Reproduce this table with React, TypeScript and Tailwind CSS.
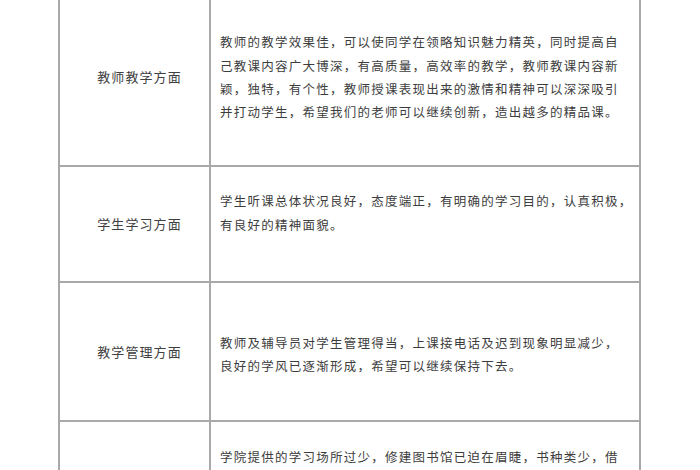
import React from "react";

const font = { fontFamily: '"Noto Sans CJK SC", "Noto Sans", sans-serif' };

type Row = { label: string; lines: string[]; h: string; rightPad?: string };

const rows: Row[] = [
  {
    label: "教师教学方面",
    lines: [
      "教师的教学效果佳，可以使同学在领略知识魅力精英，同时提高自",
      "己教课内容广大博深，有高质量，高效率的教学，教师教课内容新",
      "颖，独特，有个性，教师授课表现出来的激情和精神可以深深吸引",
      "并打动学生，希望我们的老师可以继续创新，造出越多的精品课。",
    ],
    h: "h-[178px] mt-[-11px]",
    rightPad: "",
  },
  {
    label: "学生学习方面",
    lines: [
      "学生听课总体状况良好，态度端正，有明确的学习目的，认真积极，",
      "有良好的精神面貌。",
    ],
    h: "h-[116px]",
    rightPad: "pb-[23px]",
  },
  {
    label: "教学管理方面",
    lines: [
      "教师及辅导员对学生管理得当，上课接电话及迟到现象明显减少，",
      "良好的学风已逐渐形成，希望可以继续保持下去。",
    ],
    h: "h-[139px]",
    rightPad: "pt-[5px]",
  },
];

export default function App() {
  return (
    <div className="w-[700px] h-[470px] overflow-hidden bg-white" style={font}>
      <div className="ml-[58px] w-[583px] border-x-2 border-[#a9a9a9]">
        {rows.map((r, i) => (
          <div key={i} className={`flex border-b-2 border-[#a9a9a9] ${r.h}`}>
            <div className="w-[151px] shrink-0 border-r-2 border-[#a9a9a9] flex items-center justify-center pl-[10px]">
              <span className="text-[13px] tracking-[1.1px] text-[#404040] whitespace-nowrap">{r.label}</span>
            </div>
            <div className={`flex-1 flex flex-col justify-center pl-[9px] ${r.rightPad}`}>
              {r.lines.map((l, j) => (
                <div key={j} className="text-[12.5px] leading-[23.3px] tracking-[1.25px] text-[#3d3d3d] whitespace-nowrap">
                  {l}
                </div>
              ))}
            </div>
          </div>
        ))}
        <div className="flex h-[140px]">
          <div className="w-[151px] shrink-0 border-r-2 border-[#a9a9a9]"></div>
          <div className="flex-1 flex flex-col pl-[9px] pt-[23px]">
            <div className="text-[12.5px] leading-[23.3px] tracking-[1.25px] text-[#3d3d3d] whitespace-nowrap">
              学院提供的学习场所过少，修建图书馆已迫在眉睫，书种类少，借
            </div>
          </div>
        </div>
      </div>
    </div>
  );
}
